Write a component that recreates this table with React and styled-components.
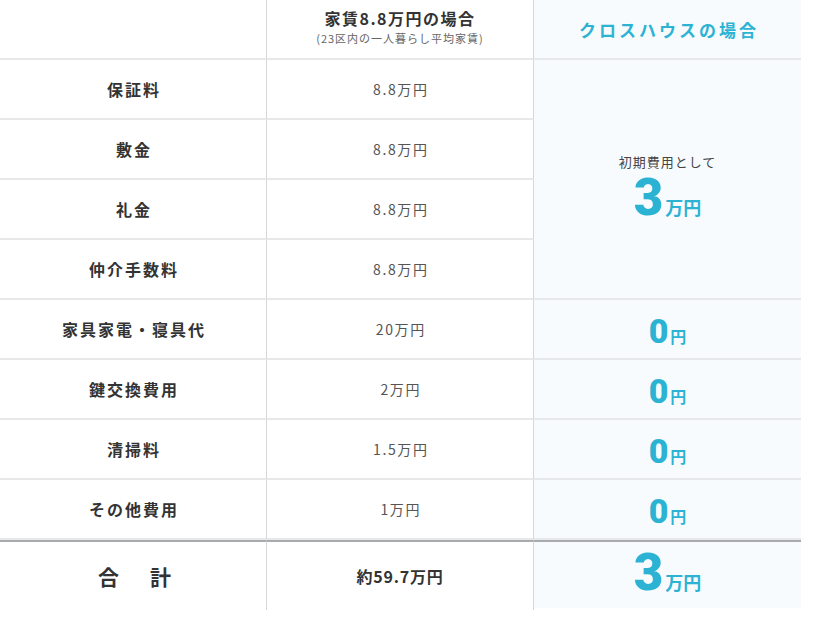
import React from "react";
import styled, { createGlobalStyle } from "styled-components";

const Global = createGlobalStyle`
  html, body { margin: 0; padding: 0; background: #fff; }
  body { font-family: "Noto Sans CJK JP", "Noto Sans", sans-serif; color: #333; }
`;

const TEAL = "#2cb3d3";

const Table = styled.div`
  display: grid;
  grid-template-columns: 267px 267px 267px;
  grid-template-rows: repeat(9, 60px) 70px;
  width: 801px;
`;

const Cell = styled.div`
  box-sizing: border-box;
  display: flex;
  flex-direction: column;
  align-items: center;
  justify-content: center;
  border-bottom: 2px solid #e7e8e9;
  border-right: ${(p) => (p.$last ? "none" : "1px solid #d6d6d6")};
  background: ${(p) => (p.$accent ? "#f8fbfd" : "#fff")};
  grid-row: ${(p) => (p.$span ? `span ${p.$span}` : "auto")};
  padding-top: ${(p) => p.$pt || 0}px;
`;

const TotalCell = styled(Cell)`
  border-bottom: none;
  border-top: 2px solid #a8aaac;
  height: ${(p) => (p.$accent ? "68px" : "70px")};
  align-self: start;
`;

const Label = styled.span`
  font-size: 16px;
  font-weight: 700;
  color: #333;
  letter-spacing: 2px;
  padding-left: 2px;
`;

const TotalLabel = styled.span`
  font-size: 21px;
  font-weight: 700;
  color: #333;
  letter-spacing: 5px;
  padding-left: 8px;
`;

const Value = styled.span`
  font-size: 14px;
  color: #555;
  letter-spacing: 1.6px;
  padding-left: 1.6px;
`;

const TotalValue = styled.span`
  font-size: 16px;
  font-weight: 700;
  color: #333;
  letter-spacing: 0.8px;
`;

const HeadTitle = styled.span`
  font-size: 16px;
  font-weight: 700;
  color: #333;
  line-height: 22px;
  margin-top: -5px;
  letter-spacing: 1.5px;
`;

const HeadSub = styled.span`
  font-size: 11px;
  color: #666;
  line-height: 16px;
  letter-spacing: 1px;
  margin-top: 1px;
`;

const AccentHead = styled.span`
  font-size: 17px;
  font-weight: 700;
  color: ${TEAL};
  letter-spacing: 3px;
  padding-left: 3px;
`;

const Note = styled.span`
  font-size: 13px;
  color: #444;
  line-height: 18px;
  letter-spacing: 1px;
`;

const Amount = styled.div`
  display: flex;
  align-items: baseline;
  color: ${TEAL};
  font-weight: 700;
  line-height: 1;
  margin-top: ${(p) => p.$mt || 0}px;
`;

const Num = styled.span`
  font-family: "Roboto", "Liberation Sans", sans-serif;
  font-weight: 900;
  font-size: ${(p) => p.$size}px;
`;

const Unit = styled.span`
  font-size: ${(p) => p.$size}px;
  font-weight: 700;
  margin-left: 2px;
`;

const rows = [
  ["保証料", "8.8万円"],
  ["敷金", "8.8万円"],
  ["礼金", "8.8万円"],
  ["仲介手数料", "8.8万円"],
  ["家具家電・寝具代", "20万円"],
  ["鍵交換費用", "2万円"],
  ["清掃料", "1.5万円"],
  ["その他費用", "1万円"],
];

export default function App() {
  return (
    <>
      <Global />
      <Table>
        <Cell />
        <Cell>
          <HeadTitle>家賃8.8万円の場合</HeadTitle>
          <HeadSub>(23区内の一人暮らし平均家賃)</HeadSub>
        </Cell>
        <Cell $accent $last>
          <AccentHead>クロスハウスの場合</AccentHead>
        </Cell>

        {rows.map(([label, value], i) => (
          <React.Fragment key={label}>
            <Cell>
              <Label>{label}</Label>
            </Cell>
            <Cell>
              <Value>{value}</Value>
            </Cell>
            {i === 0 && (
              <Cell $accent $last $span={4} $pt={18}>
                <Note>初期費用として</Note>
                <Amount $mt={1}>
                  <Num $size={51}>3</Num>
                  <Unit $size={18}>万円</Unit>
                </Amount>
              </Cell>
            )}
            {i >= 4 && (
              <Cell $accent $last>
                <Amount $mt={4}>
                  <Num $size={34}>0</Num>
                  <Unit $size={16}>円</Unit>
                </Amount>
              </Cell>
            )}
          </React.Fragment>
        ))}

        <TotalCell>
          <TotalLabel>合　計</TotalLabel>
        </TotalCell>
        <TotalCell>
          <TotalValue>約59.7万円</TotalValue>
        </TotalCell>
        <TotalCell $accent $last>
          <Amount $mt={-5}>
            <Num $size={51}>3</Num>
            <Unit $size={18}>万円</Unit>
          </Amount>
        </TotalCell>
      </Table>
    </>
  );
}
